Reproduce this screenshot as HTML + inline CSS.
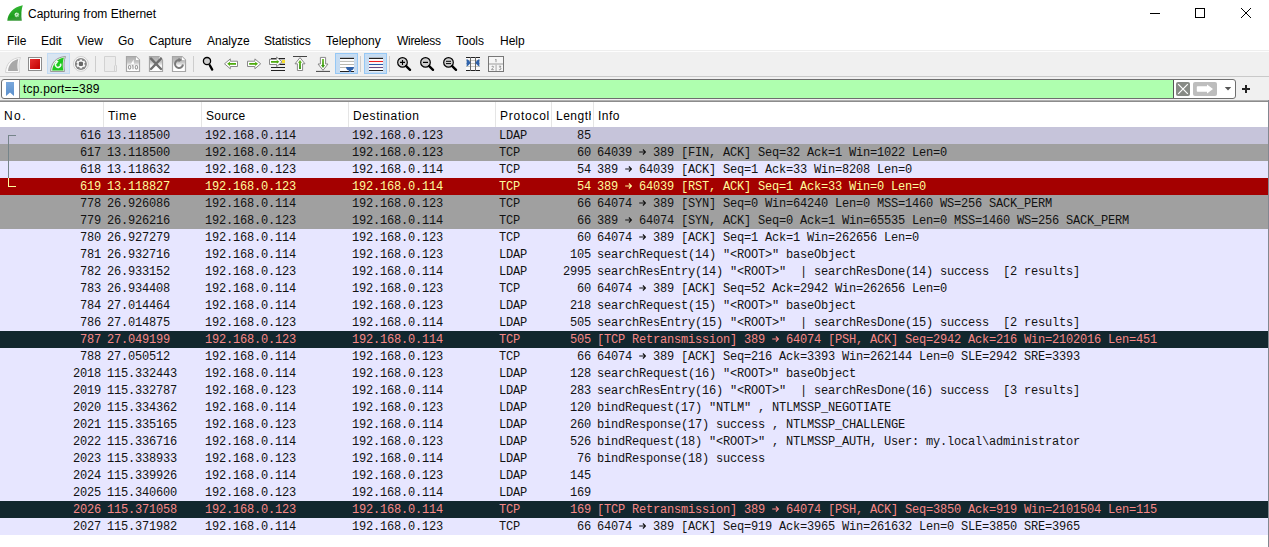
<!DOCTYPE html>
<html><head><meta charset="utf-8">
<style>
*{margin:0;padding:0;box-sizing:border-box}
html,body{width:1269px;height:547px;overflow:hidden;background:#fff;position:relative;font-family:"Liberation Sans",sans-serif;font-size:12px;color:#000}
.a{position:absolute}
.t{position:absolute;white-space:pre;line-height:14px}
#title{left:28px;top:7px}
.menu span{position:absolute;top:34px;line-height:14px}
#tb{left:0;top:50px;width:1269px;height:26px;background:#f0f0f0;border-top:1px solid #eeeeee;box-shadow:inset 0 1px 0 #fdfdfd}
#tbline{left:0;top:76px;width:1269px;height:1px;background:#c9c9c9}
#fb{left:0;top:77px;width:1269px;height:24px;background:#f0f0f0}
#fbox{left:1px;top:79px;width:1235px;height:20px;border:1px solid #6e6e6e;border-radius:3px;background:#fff}
#fgreen{left:19px;top:80px;width:1155px;height:18px;background:#afffaf;border-left:1px solid #8a8a8a;border-right:1px solid #555}
#ftext{left:23px;top:82px;letter-spacing:0.2px}
#frame{left:0;top:100px;width:1269px;height:2px;background:linear-gradient(#b0b0b0 0 50%,#8c8c8c 50% 100%)}
#rframe{left:1268px;top:100px;width:1px;height:447px;background:#828790}
#hdr{left:0;top:102px;width:1268px;height:25px;background:#fff}
.hs{position:absolute;top:102px;width:1px;height:25px;background:#e5e5e5}
.hdr span{position:absolute;top:109px;line-height:14px}
.r{position:absolute;left:0;width:1268px;height:17px;font-family:"Liberation Mono",monospace;font-size:12px;letter-spacing:-0.2px;line-height:17px;color:#121212;white-space:pre}
.r span{position:absolute;top:1px}
.ar{display:inline-block;vertical-align:1px}
.cn{right:1167px;text-align:right}
.ct{left:107px}
.cs{left:205px}
.cd{left:352px}
.cp{left:499px}
.cl{right:677px;text-align:right}
.ci{left:597px}
.tcp{background:#e7e6ff}
.hover{background:#c6c4da}
.syn{background:#a0a0a0}
.rst{background:#a40000;color:#fffc9c}
.bad{background:#12272e;color:#f78787}
</style></head><body>
<!-- title bar -->
<svg class="a" style="left:7px;top:5px" width="16" height="16" viewBox="0 0 16 16">
<defs><linearGradient id="gti" x1="0" y1="0" x2="0.3" y2="1"><stop offset="0" stop-color="#3fc23f"/><stop offset="0.75" stop-color="#1e9e1e"/><stop offset="1" stop-color="#3a9a3a"/></linearGradient></defs>
<path d="M0.3 15.8 C0.8 9 5.5 2 15.8 0.2 C14.3 4 14 10 14.8 15.8 Z" fill="url(#gti)"/>
<g transform="translate(9.8 9.8)" fill="#d8f4d8"><circle r="1.5"/><rect x="-0.5" y="-2.4" width="1" height="4.8"/><rect x="-2.4" y="-0.5" width="4.8" height="1"/><rect x="-0.5" y="-2.4" width="1" height="4.8" transform="rotate(45)"/><rect x="-2.4" y="-0.5" width="4.8" height="1" transform="rotate(45)"/></g>
<circle cx="9.8" cy="9.8" r="0.7" fill="#3aa83a"/>
</svg>
<div class="t" id="title">Capturing from Ethernet</div>
<div class="a" style="left:1150px;top:13px;width:10px;height:1px;background:#000"></div>
<div class="a" style="left:1195px;top:8px;width:10px;height:10px;border:1px solid #000"></div>
<svg class="a" style="left:1241px;top:8px" width="10" height="10" viewBox="0 0 10 10"><path d="M0 0L10 10M10 0L0 10" stroke="#000" stroke-width="1"/></svg>
<!-- menu -->
<div class="menu">
<span style="left:7px">File</span><span style="left:41px">Edit</span><span style="left:77px">View</span><span style="left:118px">Go</span><span style="left:149px">Capture</span><span style="left:207px">Analyze</span><span style="left:264px;letter-spacing:-0.15px">Statistics</span><span style="left:326px">Telephony</span><span style="left:397px;letter-spacing:-0.3px">Wireless</span><span style="left:456px">Tools</span><span style="left:500px">Help</span>
</div>
<!-- toolbar -->
<div class="a" id="tb"></div>
<div class="a" id="tbline"></div>
<svg class="a" style="left:0;top:0" width="1269" height="102" viewBox="0 0 1269 102">
<defs>
<linearGradient id="gred" x1="0" y1="0" x2="1" y2="1"><stop offset="0" stop-color="#e83030"/><stop offset="1" stop-color="#c00000"/></linearGradient>
<linearGradient id="ggrn" x1="0" y1="0" x2="0" y2="1"><stop offset="0" stop-color="#6cc02a"/><stop offset="1" stop-color="#2e8c0e"/></linearGradient>
<linearGradient id="gdoc" x1="0" y1="0" x2="0" y2="1"><stop offset="0" stop-color="#b0b0b0"/><stop offset="0.6" stop-color="#c4c4c4"/><stop offset="1" stop-color="#f4f4f4"/></linearGradient>
</defs>
<!-- start (disabled fin) -->
<path d="M5.5 72.5 C6 64 11 58 20.5 57.5 C19 61 18.5 66 19.5 72.5 Z" fill="#fafafa" stroke="#d4d4d4" stroke-width="1"/>
<path d="M8 71 C8.5 65 12 60.5 18.3 59 C17.3 62.5 17 66.5 18 71 Z" fill="#a9a9a9"/>
<!-- stop -->
<rect x="28.5" y="57.5" width="13" height="13" fill="#fff" stroke="#8c8c8c"/>
<rect x="30" y="59" width="10" height="10" fill="url(#gred)"/>
<!-- restart (selected) -->
<rect x="47.5" y="53.5" width="22" height="20" fill="#d9e5f2" stroke="#c3dbf3"/>
<path d="M50.5 71.5 C51 63 56 57 65.5 56.5 C64 60 63.5 65 64.5 71.5 Z" fill="#e6f2e6" stroke="#9c9c9c" stroke-width="1"/>
<path d="M52.2 70.6 C52.8 64 57 59 63.8 57.8 C62.6 61.5 62.4 66 63.3 70.6 Z" fill="#1ec81e"/>
<path d="M56.6 62.6 A2.6 2.6 0 1 0 60.4 63.6" fill="none" stroke="#f0fff0" stroke-width="1.5"/>
<path d="M55.2 61 L58.6 61 L56.8 64 Z" fill="#f0fff0"/>
<!-- options gear -->
<circle cx="80.9" cy="63.9" r="7.4" fill="#fbfbfb" stroke="#cfcfcf" stroke-width="1"/>
<circle cx="80.9" cy="63.9" r="6" fill="#838383"/>
<g transform="translate(80.9 63.9)" fill="#f6f6f6">
<circle r="3.4"/>
<rect x="-1.2" y="-4.5" width="2.4" height="9"/>
<rect x="-1.2" y="-4.5" width="2.4" height="9" transform="rotate(60)"/>
<rect x="-1.2" y="-4.5" width="2.4" height="9" transform="rotate(120)"/>
</g>
<rect x="78.8" y="61.8" width="4.2" height="4.2" rx="1.3" fill="#666"/>
<!-- sep -->
<rect x="95" y="56" width="1" height="16" fill="#cdcdcd"/>
<!-- open doc (disabled) -->
<path d="M104.5 56.5 H115.5 V65.5 H116.5 V71.5 H104.5 Z" fill="#ececec" stroke="#d2d2d2"/>
<path d="M114.5 65.5 V71.5" stroke="#d2d2d2"/>
<!-- save doc -->
<path d="M126.5 56.5 H136 L139.5 60 V71.5 H126.5 Z" fill="#fff" stroke="#a6a6a6" stroke-width="1.2"/>
<path d="M127 57 H135.8 L139 60.2 V65.5 H127 Z" fill="url(#gdoc)"/>
<path d="M136 57 V60 H139 Z" fill="#fff"/>
<path d="M131 64 L133.5 59.5 L134 64 Z" fill="#fff"/>
<g fill="none" stroke="#9c9c9c" stroke-width="1.1"><ellipse cx="129.6" cy="67.3" rx="1.2" ry="1.8"/><ellipse cx="136.4" cy="67.3" rx="1.2" ry="1.8"/><path d="M133 65.3 V69.2 M132 66 L133 65.3"/></g>
<!-- close doc -->
<path d="M149.5 56.5 H159 L162.5 60 V71.5 H149.5 Z" fill="#fff" stroke="#a6a6a6" stroke-width="1.2"/>
<path d="M150 57 H158.8 L162 60.2 V65.5 H150 Z" fill="url(#gdoc)"/>
<path d="M159 57 V60 H162 Z" fill="#fff"/>
<path d="M151 58.6 L161 69 M161 58.6 L151 69" stroke="#6e6e6e" stroke-width="2.4" stroke-linecap="round"/>
<!-- reload doc -->
<path d="M172.5 56.5 H182 L185.5 60 V71.5 H172.5 Z" fill="#fff" stroke="#a6a6a6" stroke-width="1.2"/>
<path d="M173 57 H181.8 L185 60.2 V65.5 H173 Z" fill="url(#gdoc)"/>
<path d="M182 57 V60 H185 Z" fill="#fff"/>
<path d="M183 64.5 A4 4 0 1 1 179.5 60" fill="none" stroke="#7a7a7a" stroke-width="2"/>
<path d="M178.5 57.8 L182.2 60 L178.5 62.2 Z" fill="#7a7a7a"/>
<!-- sep -->
<rect x="193" y="56" width="1" height="16" fill="#cdcdcd"/>
<!-- find -->
<circle cx="207" cy="61.1" r="3.6" fill="#cfcfcf" stroke="#000" stroke-width="1.3"/>
<path d="M209.8 65.3 L212.2 69.6" stroke="#000" stroke-width="2.3" stroke-linecap="round"/>
<!-- back -->
<path d="M224.5 63.8 L230.3 58.9 V61.2 H237.5 V66.5 H230.3 V68.8 Z" fill="#fff" stroke="#888" stroke-width="1" stroke-linejoin="round"/>
<path d="M227.2 63.8 L230 61.8 V63 H236 V64.7 H230 V65.9 Z" fill="#4caa0c"/>
<!-- forward -->
<path d="M260.7 63.8 L254.9 58.9 V61.2 H247.5 V66.5 H254.9 V68.8 Z" fill="#fff" stroke="#888" stroke-width="1" stroke-linejoin="round"/>
<path d="M258 63.8 L255.2 61.8 V63 H249.2 V64.7 H255.2 V65.9 Z" fill="#4caa0c"/>
<!-- go to packet -->
<g stroke="#222" stroke-width="1.1">
<path d="M271 58.6 H285 M271 64.4 H285 M271 67.5 H285 M271 70.5 H285"/>
</g>
<rect x="282" y="60" width="3" height="3" fill="#f8e030"/>
<path d="M282 61.8 L276.6 57 V59.3 H269.5 V64.5 H276.6 V66.7 Z" fill="#fff" stroke="#888" stroke-width="1" stroke-linejoin="round"/>
<path d="M279.3 61.8 L276.8 59.9 V61 H271 V62.7 H276.8 V63.8 Z" fill="#4caa0c"/>
<!-- first packet -->
<path d="M293 56.5 H307" stroke="#444" stroke-width="1"/>
<path d="M300 57.6 L305 63.8 H302.6 V70.5 H297.4 V63.8 H295 Z" fill="#fff" stroke="#888" stroke-width="1" stroke-linejoin="round"/>
<path d="M300 60 L302 62.8 H300.9 V69 H299.1 V62.8 H298 Z" fill="url(#ggrn)"/>
<!-- last packet -->
<path d="M316 71.4 H330" stroke="#444" stroke-width="1"/>
<path d="M323 70.3 L328 64 H325.6 V57.4 H320.4 V64 H318 Z" fill="#fff" stroke="#888" stroke-width="1" stroke-linejoin="round"/>
<path d="M323 68 L325 65 H323.9 V59 H322.1 V65 H321 Z" fill="url(#ggrn)"/>
<!-- auto scroll (checked) -->
<rect x="335.5" y="53.5" width="22" height="20" fill="#c6dcf2" stroke="#96c8f5"/>
<rect x="340" y="57.5" width="14" height="14.5" fill="#fff"/>
<path d="M340 58.4 H354 M340 71.5 H354" stroke="#222" stroke-width="1.1"/>
<path d="M340 61.4 H354 M340 64.5 H354 M340 67.5 H354" stroke="#b8b8b0" stroke-width="1"/>
<path d="M346 67 H354 C354 69.6 352 70.3 351 70.4 V72 H349 V70.4 C348 70.3 346 69.6 346 67 Z" fill="#2f62aa"/>
<!-- sep -->
<rect x="360" y="56" width="1" height="16" fill="#cdcdcd"/>
<!-- colorize (checked) -->
<rect x="364.5" y="53.5" width="22" height="20" fill="#c6dcf2" stroke="#96c8f5"/>
<rect x="369" y="57.5" width="14" height="14" fill="#fff"/>
<path d="M369 58.4 H383 M369 70.5 H383" stroke="#222" stroke-width="1.1"/>
<path d="M369 61.5 H383" stroke="#ee2020" stroke-width="1.1"/>
<path d="M369 64.5 H383" stroke="#2a5aa6" stroke-width="1.1"/>
<path d="M369 67.5 H383" stroke="#6a4a80" stroke-width="1.1"/>
<!-- sep -->
<rect x="389" y="56" width="1" height="16" fill="#cdcdcd"/>
<!-- zoom in -->
<circle cx="402.5" cy="62.4" r="4.8" fill="#cfcfcf" stroke="#000" stroke-width="1.2"/>
<path d="M406.2 66.2 L410 69.8" stroke="#000" stroke-width="2.4" stroke-linecap="round"/>
<path d="M400 62.4 H405 M402.5 59.9 V64.9" stroke="#000" stroke-width="1.1"/>
<!-- zoom out -->
<circle cx="425.5" cy="62.4" r="4.8" fill="#cfcfcf" stroke="#000" stroke-width="1.2"/>
<path d="M429.2 66.2 L433 69.8" stroke="#000" stroke-width="2.4" stroke-linecap="round"/>
<path d="M423 62.4 H428" stroke="#000" stroke-width="1.2"/>
<!-- normal size -->
<circle cx="448.5" cy="62.4" r="4.8" fill="#cfcfcf" stroke="#000" stroke-width="1.2"/>
<path d="M452.2 66.2 L456 69.8" stroke="#000" stroke-width="2.4" stroke-linecap="round"/>
<path d="M446 61.3 H451 M446 63.6 H451" stroke="#000" stroke-width="1"/>
<!-- resize columns -->
<rect x="466" y="57" width="14" height="14" fill="#fafafa"/>
<path d="M466 60.4 H480 M466 63.5 H480 M466 66.5 H480" stroke="#c8c8c0" stroke-width="1"/>
<path d="M466 57.5 H480 M466 70.5 H480" stroke="#222" stroke-width="1.1"/>
<path d="M470.5 57 V71 M475.5 57 V71" stroke="#6a6a6a" stroke-width="1"/>
<path d="M466.6 59 C467.5 59 470.5 62 470.5 62.7 C470.5 63.4 467.5 66.4 466.6 66.4 Z" fill="#2f62aa"/>
<path d="M479.4 59 C478.5 59 475.5 62 475.5 62.7 C475.5 63.4 478.5 66.4 479.4 66.4 Z" fill="#2f62aa"/>
<!-- layout -->
<rect x="488.5" y="56.5" width="15" height="15" fill="#f6f6f6" stroke="#777"/>
<rect x="489" y="63.2" width="14" height="1.6" fill="#bdbdbd"/>
<rect x="495.4" y="64.5" width="1.4" height="6.5" fill="#bdbdbd"/>
<g fill="none" stroke="#808080" stroke-width="0.8"><path d="M496 59 V62.2 M495.4 59.6 L496 59"/><path d="M491.6 66.9 C491.8 66 493.6 66 493.6 66.9 C493.6 67.7 491.6 68.6 491.6 69.7 H493.8"/><path d="M498.9 66.2 H500.9 L499.8 67.5 C501.3 67.5 501.3 69.8 499.8 69.8 C499.4 69.8 499.1 69.7 498.9 69.5"/></g>
</svg>

<!-- filter -->
<div class="a" id="fb"></div>
<div class="a" id="fbox"></div>
<div class="a" id="fgreen"></div>
<svg class="a" style="left:0;top:77px" width="1269" height="24" viewBox="0 77 1269 24">
<defs><linearGradient id="gbm" x1="0" y1="0" x2="0" y2="1"><stop offset="0" stop-color="#7aa8dc"/><stop offset="1" stop-color="#5a8fcc"/></linearGradient></defs>
<path d="M6 82 H14 V96 L10 92.5 L6 96 Z" fill="url(#gbm)"/>
<rect x="1176" y="82" width="14" height="14" rx="2" fill="#878a85"/>
<path d="M1178.2 84.2 L1187.8 93.8 M1187.8 84.2 L1178.2 93.8" stroke="#fff" stroke-width="1.2"/>
<rect x="1193" y="82" width="24" height="14" rx="2" fill="#bdbdbd"/>
<path d="M1197.5 86.2 H1207 V84.6 L1213 89 L1207 93.4 V91.8 H1197.5 Q1196.8 91.8 1196.8 91 V87 Q1196.8 86.2 1197.5 86.2 Z" fill="#fff"/>
<path d="M1224.8 87 H1231.2 L1228 90.5 Z" fill="#555"/>
<path d="M1242 89 H1250 M1246 85 V93" stroke="#222" stroke-width="2"/>
</svg>
<div class="t" id="ftext">tcp.port==389</div>
<!-- packet list -->
<div class="a" id="frame"></div>
<div class="a" id="hdr"></div>
<div class="hdr">
<span style="left:4px;letter-spacing:1.4px">No.</span><span style="left:108px;letter-spacing:0.7px">Time</span><span style="left:206px;letter-spacing:0.25px">Source</span><span style="left:353px;letter-spacing:0.6px">Destination</span><span style="left:500px;letter-spacing:0.75px">Protocol</span><span style="left:556px;width:35px;overflow:hidden;letter-spacing:0.5px">Length</span><span style="left:598px;letter-spacing:0.5px">Info</span>
</div>
<div class="hs" style="left:103px"></div><div class="hs" style="left:201px"></div><div class="hs" style="left:348px"></div><div class="hs" style="left:495px"></div><div class="hs" style="left:551px"></div><div class="hs" style="left:593px"></div>
<div class="r hover" style="top:127px"><span class="cn">616</span><span class="ct">13.118500</span><span class="cs">192.168.0.114</span><span class="cd">192.168.0.123</span><span class="cp">LDAP</span><span class="cl">85</span><span class="ci"></span></div>
<div class="r syn" style="top:144px"><span class="cn">617</span><span class="ct">13.118500</span><span class="cs">192.168.0.114</span><span class="cd">192.168.0.123</span><span class="cp">TCP</span><span class="cl">60</span><span class="ci">64039 <svg class="ar" width="7" height="6" viewBox="0 0 7 6"><path d="M0.2 3 H6.6 M3.9 0.5 L6.5 3 L3.9 5.5" fill="none" stroke="currentColor" stroke-width="1.15"/></svg> 389 [FIN, ACK] Seq=32 Ack=1 Win=1022 Len=0</span></div>
<div class="r tcp" style="top:161px"><span class="cn">618</span><span class="ct">13.118632</span><span class="cs">192.168.0.123</span><span class="cd">192.168.0.114</span><span class="cp">TCP</span><span class="cl">54</span><span class="ci">389 <svg class="ar" width="7" height="6" viewBox="0 0 7 6"><path d="M0.2 3 H6.6 M3.9 0.5 L6.5 3 L3.9 5.5" fill="none" stroke="currentColor" stroke-width="1.15"/></svg> 64039 [ACK] Seq=1 Ack=33 Win=8208 Len=0</span></div>
<div class="r rst" style="top:178px"><span class="cn">619</span><span class="ct">13.118827</span><span class="cs">192.168.0.123</span><span class="cd">192.168.0.114</span><span class="cp">TCP</span><span class="cl">54</span><span class="ci">389 <svg class="ar" width="7" height="6" viewBox="0 0 7 6"><path d="M0.2 3 H6.6 M3.9 0.5 L6.5 3 L3.9 5.5" fill="none" stroke="currentColor" stroke-width="1.15"/></svg> 64039 [RST, ACK] Seq=1 Ack=33 Win=0 Len=0</span></div>
<div class="r syn" style="top:195px"><span class="cn">778</span><span class="ct">26.926086</span><span class="cs">192.168.0.114</span><span class="cd">192.168.0.123</span><span class="cp">TCP</span><span class="cl">66</span><span class="ci">64074 <svg class="ar" width="7" height="6" viewBox="0 0 7 6"><path d="M0.2 3 H6.6 M3.9 0.5 L6.5 3 L3.9 5.5" fill="none" stroke="currentColor" stroke-width="1.15"/></svg> 389 [SYN] Seq=0 Win=64240 Len=0 MSS=1460 WS=256 SACK_PERM</span></div>
<div class="r syn" style="top:212px"><span class="cn">779</span><span class="ct">26.926216</span><span class="cs">192.168.0.123</span><span class="cd">192.168.0.114</span><span class="cp">TCP</span><span class="cl">66</span><span class="ci">389 <svg class="ar" width="7" height="6" viewBox="0 0 7 6"><path d="M0.2 3 H6.6 M3.9 0.5 L6.5 3 L3.9 5.5" fill="none" stroke="currentColor" stroke-width="1.15"/></svg> 64074 [SYN, ACK] Seq=0 Ack=1 Win=65535 Len=0 MSS=1460 WS=256 SACK_PERM</span></div>
<div class="r tcp" style="top:229px"><span class="cn">780</span><span class="ct">26.927279</span><span class="cs">192.168.0.114</span><span class="cd">192.168.0.123</span><span class="cp">TCP</span><span class="cl">60</span><span class="ci">64074 <svg class="ar" width="7" height="6" viewBox="0 0 7 6"><path d="M0.2 3 H6.6 M3.9 0.5 L6.5 3 L3.9 5.5" fill="none" stroke="currentColor" stroke-width="1.15"/></svg> 389 [ACK] Seq=1 Ack=1 Win=262656 Len=0</span></div>
<div class="r tcp" style="top:246px"><span class="cn">781</span><span class="ct">26.932716</span><span class="cs">192.168.0.114</span><span class="cd">192.168.0.123</span><span class="cp">LDAP</span><span class="cl">105</span><span class="ci">searchRequest(14) "&lt;ROOT&gt;" baseObject</span></div>
<div class="r tcp" style="top:263px"><span class="cn">782</span><span class="ct">26.933152</span><span class="cs">192.168.0.123</span><span class="cd">192.168.0.114</span><span class="cp">LDAP</span><span class="cl">2995</span><span class="ci">searchResEntry(14) "&lt;ROOT&gt;"  | searchResDone(14) success  [2 results]</span></div>
<div class="r tcp" style="top:280px"><span class="cn">783</span><span class="ct">26.934408</span><span class="cs">192.168.0.114</span><span class="cd">192.168.0.123</span><span class="cp">TCP</span><span class="cl">60</span><span class="ci">64074 <svg class="ar" width="7" height="6" viewBox="0 0 7 6"><path d="M0.2 3 H6.6 M3.9 0.5 L6.5 3 L3.9 5.5" fill="none" stroke="currentColor" stroke-width="1.15"/></svg> 389 [ACK] Seq=52 Ack=2942 Win=262656 Len=0</span></div>
<div class="r tcp" style="top:297px"><span class="cn">784</span><span class="ct">27.014464</span><span class="cs">192.168.0.114</span><span class="cd">192.168.0.123</span><span class="cp">LDAP</span><span class="cl">218</span><span class="ci">searchRequest(15) "&lt;ROOT&gt;" baseObject</span></div>
<div class="r tcp" style="top:314px"><span class="cn">786</span><span class="ct">27.014875</span><span class="cs">192.168.0.123</span><span class="cd">192.168.0.114</span><span class="cp">LDAP</span><span class="cl">505</span><span class="ci">searchResEntry(15) "&lt;ROOT&gt;"  | searchResDone(15) success  [2 results]</span></div>
<div class="r bad" style="top:331px"><span class="cn">787</span><span class="ct">27.049199</span><span class="cs">192.168.0.123</span><span class="cd">192.168.0.114</span><span class="cp">TCP</span><span class="cl">505</span><span class="ci">[TCP Retransmission] 389 <svg class="ar" width="7" height="6" viewBox="0 0 7 6"><path d="M0.2 3 H6.6 M3.9 0.5 L6.5 3 L3.9 5.5" fill="none" stroke="currentColor" stroke-width="1.15"/></svg> 64074 [PSH, ACK] Seq=2942 Ack=216 Win=2102016 Len=451</span></div>
<div class="r tcp" style="top:348px"><span class="cn">788</span><span class="ct">27.050512</span><span class="cs">192.168.0.114</span><span class="cd">192.168.0.123</span><span class="cp">TCP</span><span class="cl">66</span><span class="ci">64074 <svg class="ar" width="7" height="6" viewBox="0 0 7 6"><path d="M0.2 3 H6.6 M3.9 0.5 L6.5 3 L3.9 5.5" fill="none" stroke="currentColor" stroke-width="1.15"/></svg> 389 [ACK] Seq=216 Ack=3393 Win=262144 Len=0 SLE=2942 SRE=3393</span></div>
<div class="r tcp" style="top:365px"><span class="cn">2018</span><span class="ct">115.332443</span><span class="cs">192.168.0.114</span><span class="cd">192.168.0.123</span><span class="cp">LDAP</span><span class="cl">128</span><span class="ci">searchRequest(16) "&lt;ROOT&gt;" baseObject</span></div>
<div class="r tcp" style="top:382px"><span class="cn">2019</span><span class="ct">115.332787</span><span class="cs">192.168.0.123</span><span class="cd">192.168.0.114</span><span class="cp">LDAP</span><span class="cl">283</span><span class="ci">searchResEntry(16) "&lt;ROOT&gt;"  | searchResDone(16) success  [3 results]</span></div>
<div class="r tcp" style="top:399px"><span class="cn">2020</span><span class="ct">115.334362</span><span class="cs">192.168.0.114</span><span class="cd">192.168.0.123</span><span class="cp">LDAP</span><span class="cl">120</span><span class="ci">bindRequest(17) "NTLM" , NTLMSSP_NEGOTIATE</span></div>
<div class="r tcp" style="top:416px"><span class="cn">2021</span><span class="ct">115.335165</span><span class="cs">192.168.0.123</span><span class="cd">192.168.0.114</span><span class="cp">LDAP</span><span class="cl">260</span><span class="ci">bindResponse(17) success , NTLMSSP_CHALLENGE</span></div>
<div class="r tcp" style="top:433px"><span class="cn">2022</span><span class="ct">115.336716</span><span class="cs">192.168.0.114</span><span class="cd">192.168.0.123</span><span class="cp">LDAP</span><span class="cl">526</span><span class="ci">bindRequest(18) "&lt;ROOT&gt;" , NTLMSSP_AUTH, User: my.local\administrator</span></div>
<div class="r tcp" style="top:450px"><span class="cn">2023</span><span class="ct">115.338933</span><span class="cs">192.168.0.123</span><span class="cd">192.168.0.114</span><span class="cp">LDAP</span><span class="cl">76</span><span class="ci">bindResponse(18) success</span></div>
<div class="r tcp" style="top:467px"><span class="cn">2024</span><span class="ct">115.339926</span><span class="cs">192.168.0.114</span><span class="cd">192.168.0.123</span><span class="cp">LDAP</span><span class="cl">145</span><span class="ci"></span></div>
<div class="r tcp" style="top:484px"><span class="cn">2025</span><span class="ct">115.340600</span><span class="cs">192.168.0.123</span><span class="cd">192.168.0.114</span><span class="cp">LDAP</span><span class="cl">169</span><span class="ci"></span></div>
<div class="r bad" style="top:501px"><span class="cn">2026</span><span class="ct">115.371058</span><span class="cs">192.168.0.123</span><span class="cd">192.168.0.114</span><span class="cp">TCP</span><span class="cl">169</span><span class="ci">[TCP Retransmission] 389 <svg class="ar" width="7" height="6" viewBox="0 0 7 6"><path d="M0.2 3 H6.6 M3.9 0.5 L6.5 3 L3.9 5.5" fill="none" stroke="currentColor" stroke-width="1.15"/></svg> 64074 [PSH, ACK] Seq=3850 Ack=919 Win=2101504 Len=115</span></div>
<div class="r tcp" style="top:518px"><span class="cn">2027</span><span class="ct">115.371982</span><span class="cs">192.168.0.114</span><span class="cd">192.168.0.123</span><span class="cp">TCP</span><span class="cl">66</span><span class="ci">64074 <svg class="ar" width="7" height="6" viewBox="0 0 7 6"><path d="M0.2 3 H6.6 M3.9 0.5 L6.5 3 L3.9 5.5" fill="none" stroke="currentColor" stroke-width="1.15"/></svg> 389 [ACK] Seq=919 Ack=3965 Win=261632 Len=0 SLE=3850 SRE=3965</span></div>
<div class="a" style="left:8px;top:135px;width:8px;height:1px;background:#75848a"></div>
<div class="a" style="left:8px;top:135px;width:1px;height:43px;background:#75848a"></div>
<div class="a" style="left:8px;top:178px;width:1px;height:9px;background:#fffc9c"></div>
<div class="a" style="left:8px;top:186px;width:8px;height:1px;background:#fffc9c"></div>
<div class="a" id="rframe"></div>
</body></html>
